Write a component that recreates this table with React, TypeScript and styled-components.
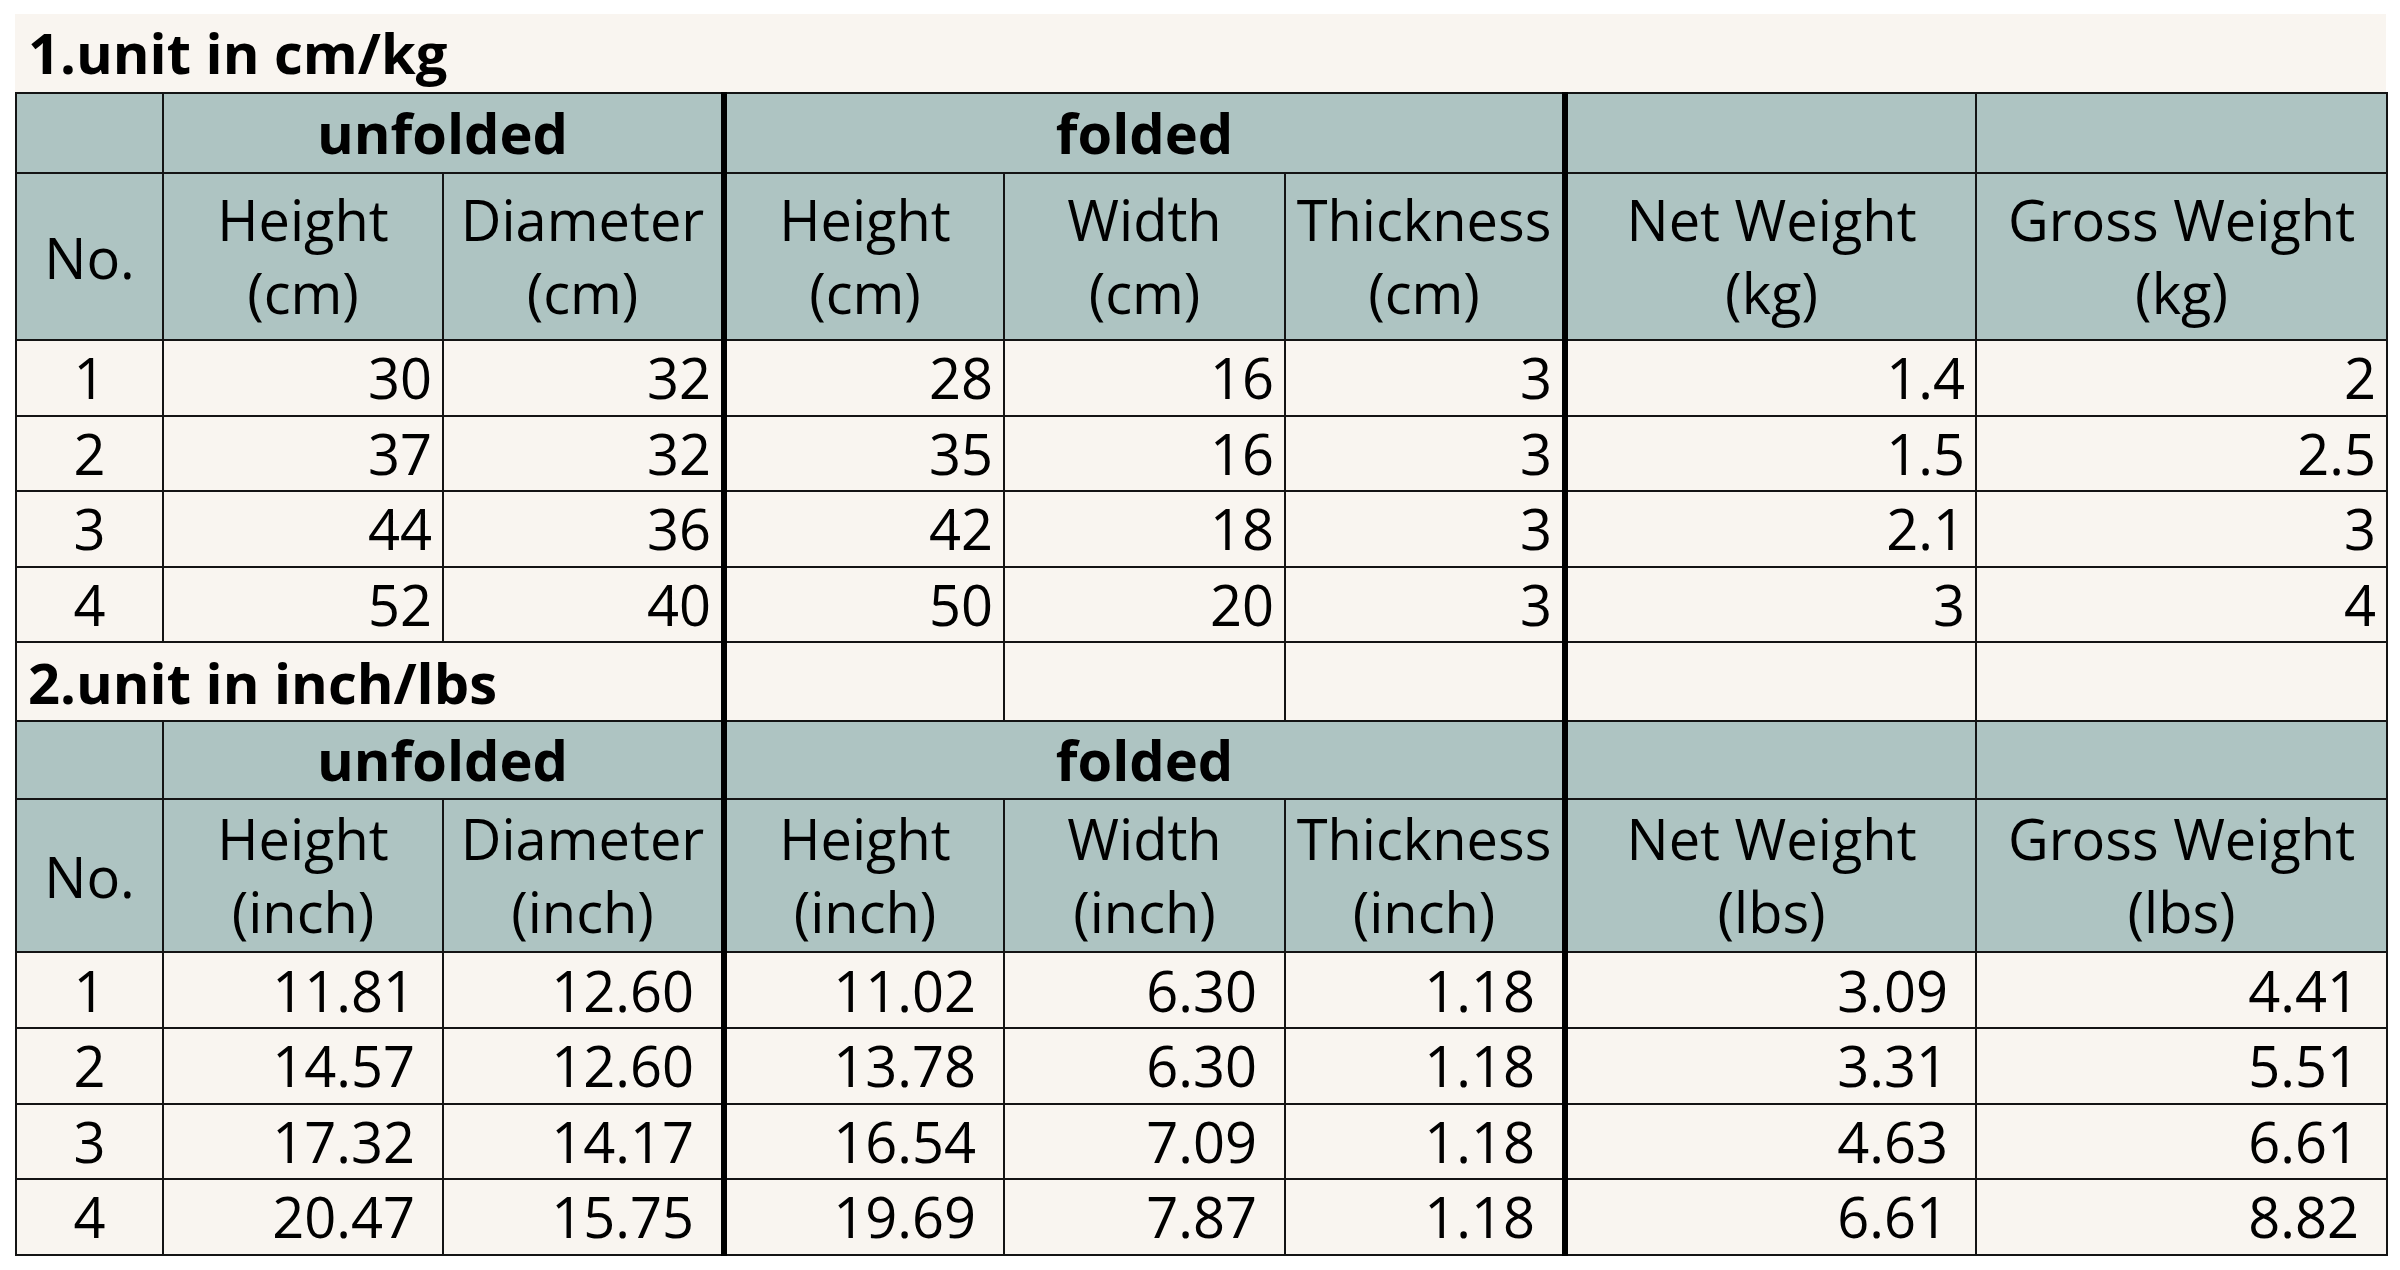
import React from 'react';
import styled, { createGlobalStyle, css } from 'styled-components';

const GlobalStyle = createGlobalStyle`
  html, body {
    margin: 0;
    padding: 0;
    background: #ffffff;
  }

  body {
    font-family: 'Open Sans', 'Noto Sans', 'Noto Sans CJK SC', sans-serif;
    color: #000;
  }
`;

type Unit = {
  title: string;
  length: string;
  weight: string;
  groupHeight: number;
  headHeight: number;
  // the inch figures are formatted with a trailing gap, so they sit further left
  inset: number;
  rows: string[][];
};

const UNITS: Unit[] = [
  {
    title: '1.unit in cm/kg',
    length: 'cm',
    weight: 'kg',
    groupHeight: 80,
    headHeight: 167,
    inset: 10,
    rows: [
      ['1', '30', '32', '28', '16', '3', '1.4', '2'],
      ['2', '37', '32', '35', '16', '3', '1.5', '2.5'],
      ['3', '44', '36', '42', '18', '3', '2.1', '3'],
      ['4', '52', '40', '50', '20', '3', '3', '4'],
    ],
  },
  {
    title: '2.unit in inch/lbs',
    length: 'inch',
    weight: 'lbs',
    groupHeight: 78,
    headHeight: 153,
    inset: 27,
    rows: [
      ['1', '11.81', '12.60', '11.02', '6.30', '1.18', '3.09', '4.41'],
      ['2', '14.57', '12.60', '13.78', '6.30', '1.18', '3.31', '5.51'],
      ['3', '17.32', '14.17', '16.54', '7.09', '1.18', '4.63', '6.61'],
      ['4', '20.47', '15.75', '19.69', '7.87', '1.18', '6.61', '8.82'],
    ],
  },
];

const COLUMN_WIDTHS = [147, 280, 281, 280, 281, 280, 411, 411];
// a heavy rule closes the "unfolded" and the "folded" groups
const THICK_AFTER = [2, 5];

const App: React.FC = () => {
  return (
    <>
      <GlobalStyle />
      <Sheet>
        <SheetTitle>{UNITS[0].title}</SheetTitle>
        <Grid>
          <colgroup>
            {COLUMN_WIDTHS.map((w, i) => (
              <col key={`col_${i}`} style={{ width: w }} />
            ))}
          </colgroup>
          <tbody>
            {UNITS.map((unit, u) => (
              <React.Fragment key={`unit_${u}`}>
                {u > 0 && (
                  <Row $height={79}>
                    <TitleCell colSpan={3} $thick>
                      {unit.title}
                    </TitleCell>
                    <Cell />
                    <Cell />
                    <Cell $thick />
                    <Cell />
                    <Cell />
                  </Row>
                )}

                <Row $height={unit.groupHeight}>
                  <HeadCell />
                  <GroupCell colSpan={2} $thick>
                    unfolded
                  </GroupCell>
                  <GroupCell colSpan={3} $thick>
                    folded
                  </GroupCell>
                  <HeadCell />
                  <HeadCell />
                </Row>

                <Row $height={unit.headHeight}>
                  <HeadCell>No.</HeadCell>
                  <LabelCell>
                    Height
                    <br />({unit.length})
                  </LabelCell>
                  <LabelCell $thick>
                    Diameter
                    <br />({unit.length})
                  </LabelCell>
                  <LabelCell>
                    Height
                    <br />({unit.length})
                  </LabelCell>
                  <LabelCell>
                    Width
                    <br />({unit.length})
                  </LabelCell>
                  <LabelCell $thick>
                    Thickness
                    <br />({unit.length})
                  </LabelCell>
                  <LabelCell>
                    Net Weight
                    <br />({unit.weight})
                  </LabelCell>
                  <LabelCell>
                    Gross Weight
                    <br />({unit.weight})
                  </LabelCell>
                </Row>

                {unit.rows.map((values, r) => (
                  <Row key={`row_${u}_${r}`} $height={75.6}>
                    {values.map((value, c) => (
                      <Cell
                        key={`cell_${u}_${r}_${c}`}
                        $align={c === 0 ? 'center' : 'right'}
                        $inset={unit.inset}
                        $thick={THICK_AFTER.includes(c)}
                      >
                        {value}
                      </Cell>
                    ))}
                  </Row>
                ))}
              </React.Fragment>
            ))}
          </tbody>
        </Grid>
      </Sheet>
    </>
  );
};

const Sheet = styled.div`
  display: flex;
  flex-direction: column;
  width: 2371px;
  padding: 14px 0 14px 15px;
`;

const SheetTitle = styled.div`
  height: 78px;
  padding-left: 13px;
  background: #f9f5f0;
  font-size: 56px;
  font-weight: 700;
  line-height: 76px;
  white-space: nowrap;
`;

const Grid = styled.table`
  width: 2371px;
  table-layout: fixed;
  border-collapse: collapse;
  background: #f9f5f0;
  font-size: 56px;
`;

const Row = styled.tr<{ $height: number }>`
  height: ${(p) => p.$height}px;
`;

const cellBase = css<{ $thick?: boolean }>`
  padding: 0;
  border: 2px solid #141414;
  vertical-align: middle;
  white-space: nowrap;
  overflow: hidden;

  ${(p) =>
    p.$thick &&
    css`
      border-right: 6px solid #000;
    `}
`;

const Cell = styled.td<{ $thick?: boolean; $align?: 'center' | 'right'; $inset?: number }>`
  ${cellBase}
  text-align: ${(p) => p.$align || 'right'};
  padding-right: ${(p) => (p.$align === 'center' ? 0 : p.$inset ?? 10)}px;
  font-weight: 400;
  line-height: 1.2;
`;

const HeadCell = styled.th<{ $thick?: boolean }>`
  ${cellBase}
  background: #aec4c2;
  text-align: center;
  font-weight: 400;
  line-height: 72px;
`;

const LabelCell = styled(HeadCell)`
  line-height: 73px;
  padding-bottom: 2px;
`;

const GroupCell = styled(HeadCell)`
  font-weight: 700;
  line-height: 70px;
  padding-bottom: 3px;
`;

const TitleCell = styled.td<{ $thick?: boolean }>`
  ${cellBase}
  padding-left: 11px;
  text-align: left;
  font-weight: 700;
  line-height: 72px;
`;

export default App;
